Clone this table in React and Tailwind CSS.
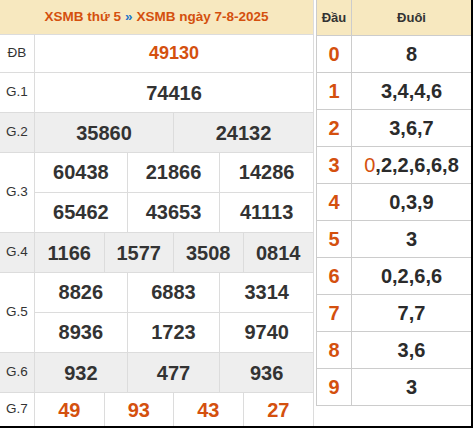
import React from "react";

const font = { fontFamily: '"Liberation Sans", Arial, sans-serif' };

function Row({ label, h, grey, cols, orange, size = "text-[20px]", last }) {
  return (
    <div
      className={`flex ${last ? "flex-1" : "border-b border-[#dcdcdc]"} ${grey ? "bg-[#eeeeee]" : "bg-white"}`}
      style={last ? undefined : { height: h }}
    >
      <div className="w-[35px] shrink-0 border-r border-[#dcdcdc] flex items-center justify-center text-[13.5px] text-[#333]">
        {label}
      </div>
      <div className={`flex-1 grid divide-x divide-[#dcdcdc] ${cols.length === 1 ? "grid-cols-1" : cols.length === 2 ? "grid-cols-2" : cols.length === 3 ? "grid-cols-3" : "grid-cols-4"}`}>
        {cols.map((c, i) => (
          <div key={i} className={`flex items-center justify-center font-bold ${size} ${orange ? "text-[#d4500e]" : "text-[#333]"}`}>
            {c}
          </div>
        ))}
      </div>
    </div>
  );
}

function DoubleRow({ label, rows }) {
  return (
    <div className="flex border-b border-[#dcdcdc] bg-white h-[80px]">
      <div className="w-[35px] shrink-0 border-r border-[#dcdcdc] flex items-center justify-center text-[13.5px] text-[#333]">
        {label}
      </div>
      <div className="flex-1 flex flex-col">
        {rows.map((r, j) => (
          <div key={j} className={`grid grid-cols-3 divide-x divide-[#dcdcdc] h-[40px] ${j === 0 ? "border-b border-[#dcdcdc]" : ""}`}>
            {r.map((c, i) => (
              <div key={i} className="flex items-center justify-center font-bold text-[20px] text-[#333]">
                {c}
              </div>
            ))}
          </div>
        ))}
      </div>
    </div>
  );
}

const tails = [
  ["0", "8"],
  ["1", "3,4,4,6"],
  ["2", "3,6,7"],
  ["3", "0,2,2,6,6,8"],
  ["4", "0,3,9"],
  ["5", "3"],
  ["6", "0,2,6,6"],
  ["7", "7,7"],
  ["8", "3,6"],
  ["9", "3"],
];

export default function App() {
  return (
    <div className="w-[473px] h-[428px] bg-black" style={font}>
      <div className="w-[471px] h-[426px] bg-white flex overflow-hidden">
        <div className="w-[314px] shrink-0 border-r border-[#dcdcdc] flex flex-col">
          <div className="h-[35px] shrink-0 bg-[#f7e8bf] border-b border-[#dcdcdc] flex items-center justify-center text-[13.5px] font-bold text-[#d4500e]">
            <span>XSMB thứ 5</span>
            <span className="text-[#1b74c8] mx-[4px]">»</span>
            <span>XSMB ngày 7-8-2025</span>
          </div>
          <Row label="ĐB" h={38} cols={["49130"]} orange size="text-[18px]" />
          <Row label="G.1" h={40} cols={["74416"]} />
          <Row label="G.2" h={40} grey cols={["35860", "24132"]} />
          <DoubleRow label="G.3" rows={[["60438", "21866", "14286"], ["65462", "43653", "41113"]]} />
          <Row label="G.4" h={40} grey cols={["1166", "1577", "3508", "0814"]} />
          <DoubleRow label="G.5" rows={[["8826", "6883", "3314"], ["8936", "1723", "9740"]]} />
          <Row label="G.6" h={40} grey cols={["932", "477", "936"]} />
          <Row label="G.7" last cols={["49", "93", "43", "27"]} orange />
        </div>
        <div className="ml-[2px] flex-1 flex flex-col">
          <div className="border-l border-[#cccccc]">
            <div className="flex h-[36px] bg-[#f7e8bf] border-b border-[#cccccc] text-[13px] font-bold text-[#333]">
              <div className="w-[35px] border-r border-[#cccccc] flex items-center justify-center">Đầu</div>
              <div className="flex-1 flex items-center justify-center">Đuôi</div>
            </div>
            {tails.map(([h, t]) => (
              <div key={h} className="flex h-[37px] border-b border-[#cccccc] bg-white">
                <div className="w-[35px] border-r border-[#cccccc] flex items-center justify-center font-bold text-[20px] text-[#d4500e]">
                  {h}
                </div>
                <div className="flex-1 flex items-center justify-center font-bold text-[20px] text-[#2b2b2b]">
                  {h === "3" ? (
                    <>
                      <span className="text-[#d4500e] font-normal">0</span>
                      <span>,2,2,6,6,8</span>
                    </>
                  ) : (
                    t
                  )}
                </div>
              </div>
            ))}
          </div>
        </div>
      </div>
    </div>
  );
}
